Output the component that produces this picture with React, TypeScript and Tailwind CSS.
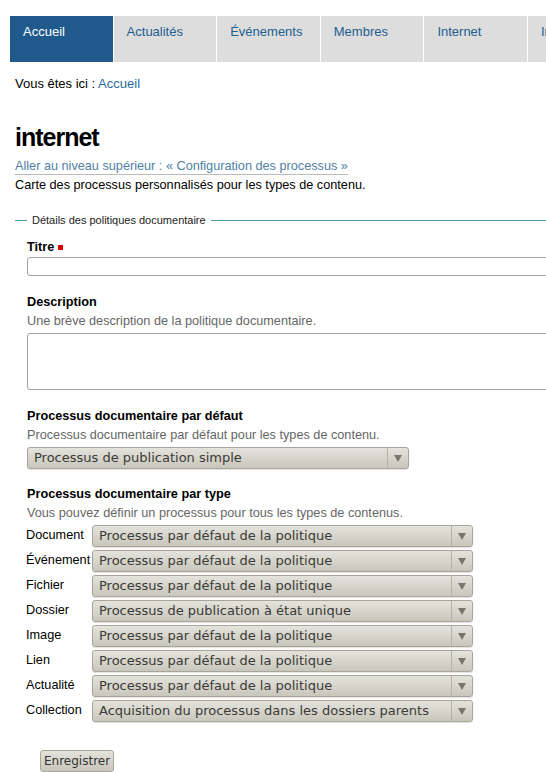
import React from 'react';

const tabs = ['Accueil', 'Actualités', 'Événements', 'Membres', 'Internet', 'Intranet'];

const rows: [string, string][] = [
  ['Document', 'Processus par défaut de la politique'],
  ['Événement', 'Processus par défaut de la politique'],
  ['Fichier', 'Processus par défaut de la politique'],
  ['Dossier', 'Processus de publication à état unique'],
  ['Image', 'Processus par défaut de la politique'],
  ['Lien', 'Processus par défaut de la politique'],
  ['Actualité', 'Processus par défaut de la politique'],
  ['Collection', 'Acquisition du processus dans les dossiers parents'],
];

function FakeSelect({ value, width }: { value: string; width: string }) {
  return (
    <div
      className={`${width} h-[22px] shrink-0 flex items-stretch rounded-[3px] border border-[#a8a69c] bg-gradient-to-b from-[#e4e3dc] to-[#c9c7bc] shadow-[0_1px_1px_rgba(0,0,0,0.12)]`}
    >
      <span className="flex-1 pl-[6px] leading-[20px] text-[13px] text-[#3a3a36] font-['DejaVu_Sans',sans-serif] whitespace-nowrap overflow-hidden">
        {value}
      </span>
      <span className="w-[21px] border-l border-[#b4b2a8] flex items-center justify-center">
        <svg width="8" height="7" viewBox="0 0 8 7">
          <path d="M0 0 L8 0 L4 7 Z" fill="#77756d" />
        </svg>
      </span>
    </div>
  );
}

export default function App() {
  return (
    <div className="min-h-[772px] bg-white text-[13px] text-black font-['Liberation_Sans',Arial,sans-serif] overflow-hidden">
      {/* Navigation tabs */}
      <nav className="pt-[16px] pl-[10px] flex gap-[1px] whitespace-nowrap">
        {tabs.map((t, i) => (
          <div
            key={t}
            className={`shrink-0 w-[102.6px] h-[46px] pl-[13px] pt-[6px] ${
              i === 0 ? 'bg-[#205a8c] text-white' : 'bg-[#dddddd] text-[#235d90]'
            }`}
          >
            {t}
          </div>
        ))}
      </nav>

      <div className="pl-[15px]">
        {/* Breadcrumb */}
        <p className="mt-[14px] leading-[16px]">
          Vous êtes ici : <span className="text-[#2a6aa0]">Accueil</span>
        </p>

        <h1 className="mt-[31px] text-[25px] font-bold leading-[28px] tracking-[-1px]">internet</h1>

        <div className="text-[12.7px]">
          <p className="mt-[7px] leading-[16px]">
            <span className="text-[#4f7fa6] border-b border-[#bbbbbb] pb-[1px]">
              Aller au niveau supérieur : « Configuration des processus »
            </span>
          </p>
          <p className="mt-[3px] leading-[16px]">Carte des processus personnalisés pour les types de contenu.</p>

          {/* Fieldset legend */}
          <div className="mt-[19px] h-[16px] flex items-center gap-[5px]">
            <span className="w-[12px] h-px bg-[#4f9ab4]" />
            <span className="text-[11px] leading-[16px] text-[#222]">Détails des politiques documentaire</span>
            <span className="flex-1 h-px bg-[#4f9ab4]" />
          </div>

          <div className="pl-[12px]">
            <div className="mt-[11px] font-bold leading-[16px] flex items-center gap-[4px]">
              Titre <span className="w-[5px] h-[5px] bg-[#e00000] inline-block" />
            </div>
            <div className="mt-[2px] h-[19px] w-[560px] rounded-[3px] border border-[#a5a39b]" />

            <div className="mt-[18px] font-bold leading-[16px]">Description</div>
            <div className="mt-[3px] leading-[16px] text-[#666]">Une brève description de la politique documentaire.</div>
            <div className="mt-[4px] h-[57px] w-[560px] rounded-[3px] border border-[#a5a39b]" />

            <div className="mt-[18px] font-bold leading-[16px]">Processus documentaire par défaut</div>
            <div className="mt-[3px] leading-[16px] text-[#666]">Processus documentaire par défaut pour les types de contenu.</div>
            <div className="mt-[4px]">
              <FakeSelect value="Processus de publication simple" width="w-[382px]" />
            </div>

            <div className="mt-[17px] font-bold leading-[16px]">Processus documentaire par type</div>
            <div className="mt-[3px] leading-[16px] text-[#666]">Vous pouvez définir un processus pour tous les types de contenus.</div>

            <div className="mt-[4px] flex flex-col gap-[3px]">
              {rows.map(([label, value]) => (
                <div key={label} className="flex items-start">
                  <span className="w-[66px] -ml-[1px] pt-[2px] leading-[16px] whitespace-nowrap">{label}</span>
                  <FakeSelect value={value} width="w-[381px]" />
                </div>
              ))}
            </div>

            <button className="mt-[28px] ml-[13px] h-[22px] px-[3px] rounded-[3px] border border-[#a8a69c] bg-gradient-to-b from-[#e4e3dc] to-[#c9c7bc] text-[12px] text-[#333] font-['DejaVu_Sans',sans-serif]">
              Enregistrer
            </button>
          </div>
        </div>
      </div>
    </div>
  );
}
